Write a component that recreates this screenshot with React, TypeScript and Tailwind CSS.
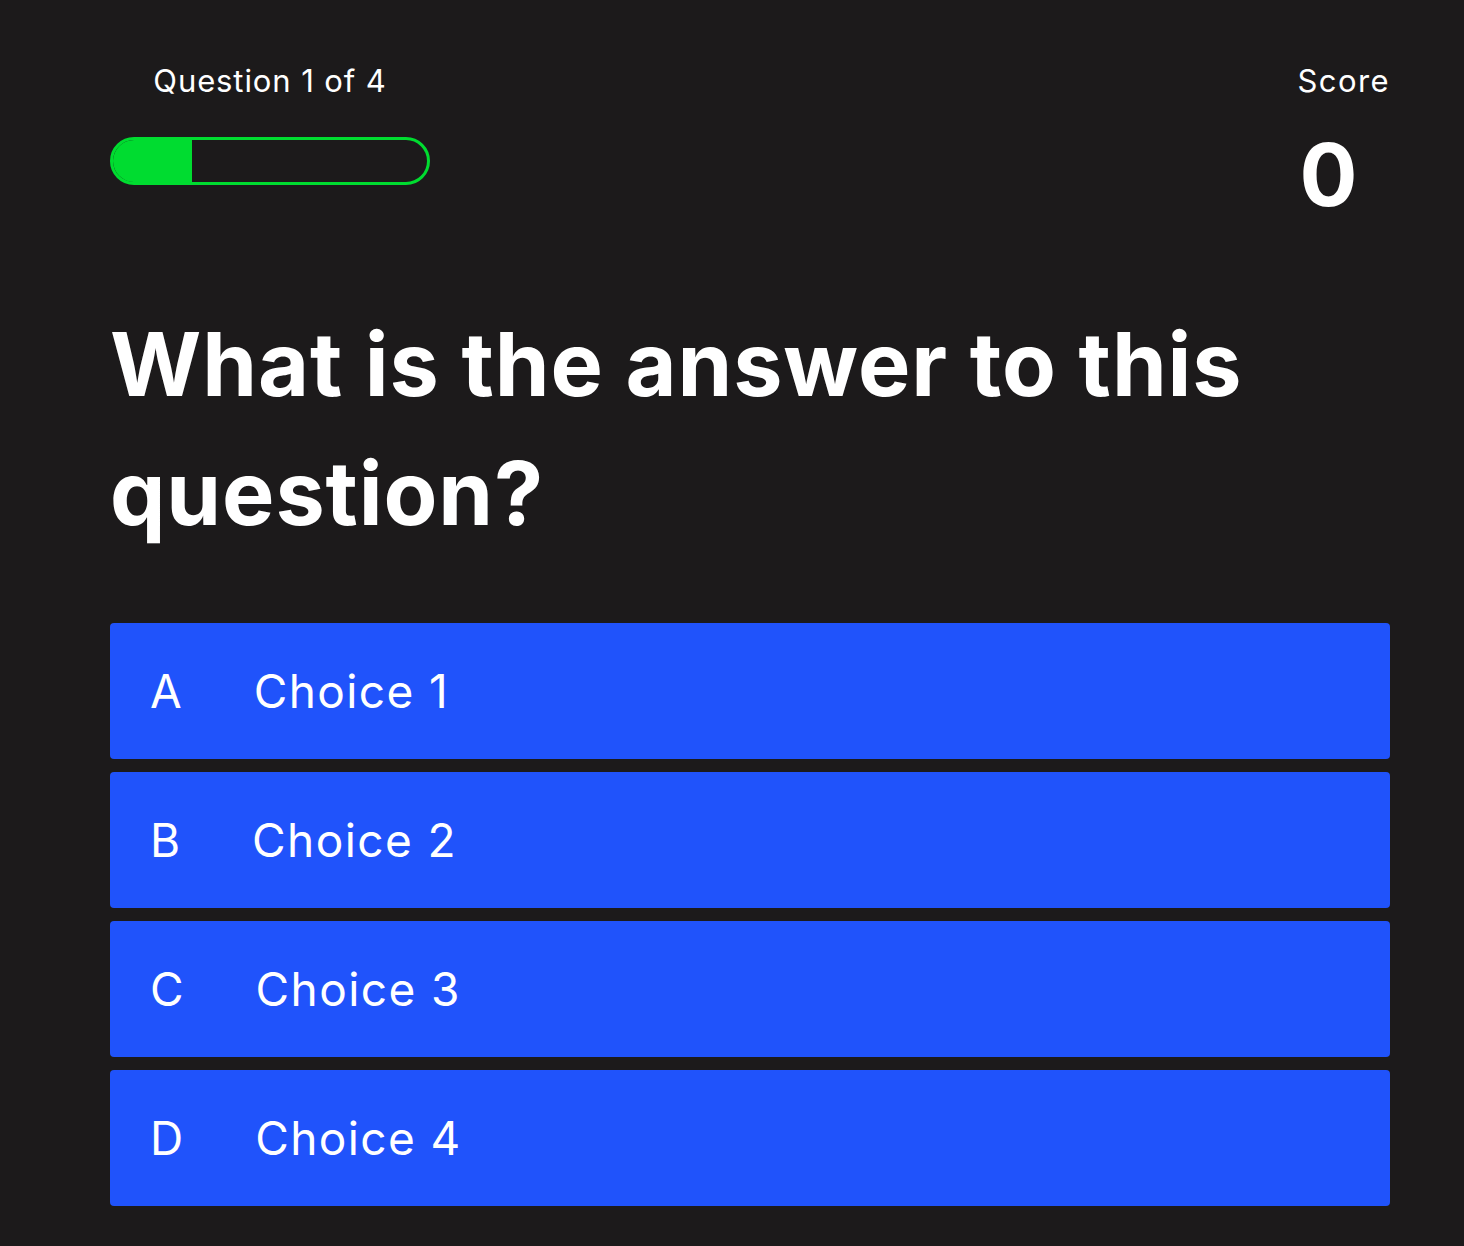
import React from "react";

const choices = [
  { letter: "A", text: "Choice 1" },
  { letter: "B", text: "Choice 2" },
  { letter: "C", text: "Choice 3" },
  { letter: "D", text: "Choice 4" },
];

export default function App() {
  return (
    <div
      className="min-h-screen w-full bg-[#1c1a1b] text-white"
      style={{ fontFamily: "Inter, 'Noto Sans', sans-serif" }}
    >
      <div className="ml-[110px] w-[1280px] pt-[59px]">
        <div className="flex items-start justify-between">
          <div className="flex w-[320px] flex-col items-center">
            <div className="text-[31px] leading-[44px] tracking-[0.9px]">Question 1 of 4</div>
            <div className="mt-[34px] h-[48px] w-[320px] overflow-hidden rounded-full border-[3px] border-[#00dc30]">
              <div className="h-full w-[25%] bg-[#00dc30]" />
            </div>
          </div>
          <div className="flex flex-col items-start">
            <div className="text-[31px] leading-[44px] tracking-[1.4px]">Score</div>
            <div className="mt-[29px] pl-[2px] text-[86px] font-bold leading-[86px]">0</div>
          </div>
        </div>

        <h1 className="mt-[82px] text-[88px] font-bold leading-[129px] tracking-[0.9px]">
          What is the answer to this question?
        </h1>

        <div className="mt-[65px] flex flex-col gap-[13px]">
          {choices.map((c) => (
            <button
              key={c.letter}
              className="flex h-[136px] w-full items-center rounded-[4px] bg-[#2053fb] pl-[40px] text-left text-[46px] text-white"
            >
              <span className="mr-[72px]">{c.letter}</span>
              <span className="tracking-[1.4px]">{c.text}</span>
            </button>
          ))}
        </div>
      </div>
    </div>
  );
}
